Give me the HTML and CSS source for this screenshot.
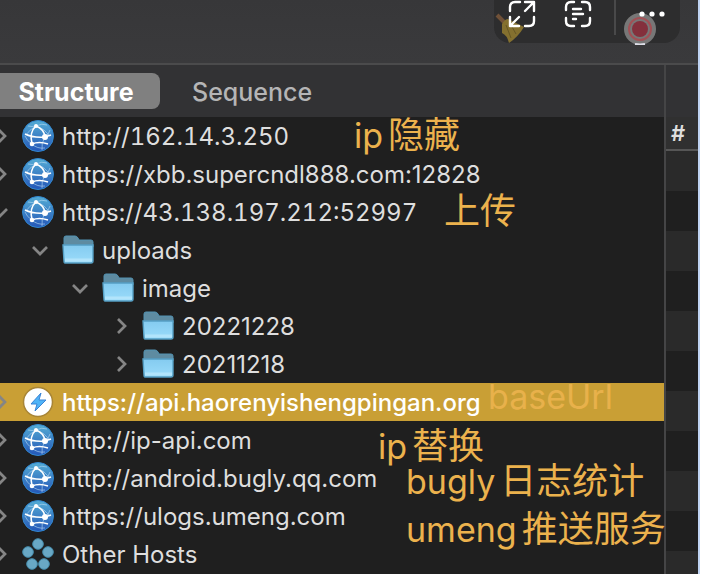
FILE: index.html
```html
<!DOCTYPE html>
<html lang="zh-CN">

<head>
    <meta charset="UTF-8">
    <meta name="viewport" content="width=device-width, initial-scale=1.0">
    <title>Structure</title>

    <link rel="stylesheet" href="styles.css">
</head>

<body>
    <!-- shared icons -->
    <svg class="symbols" aria-hidden="true">
        <linearGradient id="sky" x1="0" y1="0" x2="0" y2="1">
            <stop offset="0" stop-color="#55add4" />
            <stop offset="1" stop-color="#2456b8" />
        </linearGradient>
        <linearGradient id="paper" x1="0" y1="0" x2="0" y2="1">
            <stop offset="0" stop-color="#84cbf0" />
            <stop offset="1" stop-color="#9bdcfa" />
        </linearGradient>
        <symbol id="globe" viewBox="0 0 32 32">
            <circle cx="16" cy="16" r="15.5" fill="url(#sky)" stroke="#3187cf" />
            <g fill="none" stroke="#b9dcf5" stroke-width="1" opacity=".6">
                <path d="M6 6Q10 7 14 6Q20 3 25 5M4 15Q7 10 14 6Q22 8 28 16M28 10Q27 14 23 17Q19 23 20 30M10 24Q15 29 23 28M3 16Q5 21 10 24" />
            </g>
            <g fill="none" stroke="#fff" stroke-width="1.6">
                <path d="M14 6Q7 12 10 24M14 6Q22 9 23 17M3 14Q11 18 23 17L29 15M10 24Q17 21 26 24" />
            </g>
            <g fill="#fff">
                <circle cx="14" cy="6" r="2" />
                <circle cx="23" cy="17" r="3" />
                <circle cx="10" cy="24" r="2.3" />
            </g>
        </symbol>
        <symbol id="folder" viewBox="0 0 32 32">
            <path d="M2 13V4Q2 2 4 2H13Q15 2 16 4L17 6H29Q31 6 31 8V13Z" fill="#5e8ba1" stroke="#5293b3" />
            <path d="M1 11H31V27Q31 29 29 29H3Q2 29 2 27Z" fill="url(#paper)" stroke="#559fc4" stroke-width="1.4" />
            <path d="M3 26H30" stroke="#b2e4fb" stroke-width="3" />
        </symbol>
        <symbol id="bolt" viewBox="0 0 32 32">
            <circle cx="16" cy="16" r="14.5" fill="#fff" stroke="#a88536" stroke-width="1.5" />
            <path d="M19 7L9 18H15L13 25L24 14H17Z" fill="#50b4f7" stroke="#3a83d5" />
        </symbol>
        <symbol id="hosts" viewBox="0 0 32 32">
            <g fill="#69a8c5" stroke="#468eae">
                <circle cx="16" cy="6" r="5.3" />
                <circle cx="6" cy="14" r="5.3" />
                <circle cx="26" cy="14" r="5.3" />
                <circle cx="10" cy="26" r="5.3" />
                <circle cx="22" cy="26" r="5.3" />
            </g>
        </symbol>
        <symbol id="closed" viewBox="0 0 16 16">
            <path d="M6 1L13 8L6 15" fill="none" stroke="currentColor" stroke-width="2.7" />
        </symbol>
        <symbol id="open" viewBox="0 0 16 16">
            <path d="M1 5L8 12L15 5" fill="none" stroke="currentColor" stroke-width="2.7" />
        </symbol>
    </svg>

    <div class="window">
        <header class="titlebar">
            <div class="tools">
                <svg class="broom" viewBox="0 0 32 32" aria-hidden="true">
                    <path d="M3 3L11 11" stroke="#705138" stroke-width="4" />
                    <path d="M8 12Q11 7 14 7L30 15Q24 25 15 31Q13 23 8 21Z" fill="#84702f" />
                    <path d="M12 13L17 26M17 13L22 22" stroke="#665725" />
                </svg>
                <svg class="record" viewBox="0 0 32 32" aria-hidden="true">
                    <circle cx="16" cy="16" r="16" fill="#777" />
                    <circle cx="16" cy="16" r="11" fill="none" stroke="#a25055" stroke-width="2" />
                    <circle cx="16" cy="16" r="8" fill="#84303c" />
                    <path d="M11 31Q16 32 21 31" stroke="#dfdfe8" stroke-width="2" fill="none" />
                </svg>
                <button type="button" aria-label="Expand">
                    <svg viewBox="0 0 28 28">
                        <path d="M12 2H7Q2 2 2 7V11M2 17V26H11M17 26H21Q26 26 26 21V17M17 2H26V11M26 2L17 11M2 26L11 17" />
                    </svg>
                </button>
                <button type="button" aria-label="Scan text">
                    <svg viewBox="0 0 28 28">
                        <path d="M10 2H7Q2 2 2 7V10M18 2H21Q26 2 26 7V10M2 18V21Q2 26 7 26H10M18 26H21Q26 26 26 21V18M9 9H17M9 14H19M9 19H12" />
                    </svg>
                </button>
                <button type="button" class="more" aria-label="More">
                    <svg viewBox="0 0 28 28">
                        <circle cx="4" cy="14" r="2.6" />
                        <circle cx="14" cy="14" r="2.6" />
                        <circle cx="24" cy="14" r="2.6" />
                    </svg>
                </button>
            </div>
        </header>

        <main class="panes">
            <section class="navigator">
                <nav class="tabs">
                    <button type="button" class="tab active">Structure</button>
                    <button type="button" class="tab">Sequence</button>
                </nav>
                <ul class="tree">
                    <li class="row ip">
                        <button type="button" class="arrow" aria-label="Toggle"><svg><use href="#closed" /></svg></button>
                        <svg class="icon"><use href="#globe" /></svg>
                        <span>http://162.14.3.250</span>
                    </li>
                    <li class="row">
                        <button type="button" class="arrow" aria-label="Toggle"><svg><use href="#closed" /></svg></button>
                        <svg class="icon"><use href="#globe" /></svg>
                        <span>https://xbb.supercndl888.com:12828</span>
                    </li>
                    <li class="row ip">
                        <button type="button" class="arrow" aria-label="Toggle"><svg><use href="#open" /></svg></button>
                        <svg class="icon"><use href="#globe" /></svg>
                        <span>https://43.138.197.212:52997</span>
                    </li>
                    <li class="row level-1">
                        <button type="button" class="arrow" aria-label="Toggle"><svg><use href="#open" /></svg></button>
                        <svg class="icon"><use href="#folder" /></svg>
                        <span>uploads</span>
                    </li>
                    <li class="row level-2">
                        <button type="button" class="arrow" aria-label="Toggle"><svg><use href="#open" /></svg></button>
                        <svg class="icon"><use href="#folder" /></svg>
                        <span>image</span>
                    </li>
                    <li class="row level-3">
                        <button type="button" class="arrow" aria-label="Toggle"><svg><use href="#closed" /></svg></button>
                        <svg class="icon"><use href="#folder" /></svg>
                        <span>20221228</span>
                    </li>
                    <li class="row level-3">
                        <button type="button" class="arrow" aria-label="Toggle"><svg><use href="#closed" /></svg></button>
                        <svg class="icon"><use href="#folder" /></svg>
                        <span>20211218</span>
                    </li>
                    <li class="row selected">
                        <button type="button" class="arrow" aria-label="Toggle"><svg><use href="#closed" /></svg></button>
                        <svg class="icon"><use href="#bolt" /></svg>
                        <span>https://api.haorenyishengpingan.org</span>
                    </li>
                    <li class="row">
                        <button type="button" class="arrow" aria-label="Toggle"><svg><use href="#closed" /></svg></button>
                        <svg class="icon"><use href="#globe" /></svg>
                        <span>http://ip-api.com</span>
                    </li>
                    <li class="row">
                        <button type="button" class="arrow" aria-label="Toggle"><svg><use href="#closed" /></svg></button>
                        <svg class="icon"><use href="#globe" /></svg>
                        <span>http://android.bugly.qq.com</span>
                    </li>
                    <li class="row">
                        <button type="button" class="arrow" aria-label="Toggle"><svg><use href="#closed" /></svg></button>
                        <svg class="icon"><use href="#globe" /></svg>
                        <span>https://ulogs.umeng.com</span>
                    </li>
                    <li class="row">
                        <button type="button" class="arrow" aria-label="Toggle"><svg><use href="#closed" /></svg></button>
                        <svg class="icon"><use href="#hosts" /></svg>
                        <span>Other Hosts</span>
                    </li>
                </ul>
            </section>
            <section class="contents">
                <div class="column-head">#</div>
                <div class="stripes"></div>
            </section>
        </main>
    </div>

    <!-- notes over the tree -->
    <div class="note note-hidden">ip<span>隐藏</span></div>
    <div class="note note-upload"><span>上传</span></div>
    <div class="note note-base">baseUrl</div>
    <div class="note note-replace">ip<span>替换</span></div>
    <div class="note note-bugly">bugly<span>日志统计</span></div>
    <div class="note note-umeng">umeng<span>推送服务</span></div>
</body>

</html>
```
FILE: styles.css
```css
* {
    margin: 0;
    padding: 0;
    box-sizing: border-box;
}
body {
    position: relative;
    height: 100vh;
    overflow: hidden;
    background: #fff;
    font-family: Inter, "Noto Sans CJK SC", sans-serif;
    font-size: 24px;
    color: #dedede;
}
button {
    border: none;
    background: none;
    font: inherit;
    color: inherit;
}
svg {
    display: block;
}
.symbols {
    position: absolute;
    width: 0;
    height: 0;
}
.window {
    display: flex;
    flex-direction: column;
    height: 100%;
    margin-right: 6px;
    border-right: 2px solid #bfd3f2;
    background: #1f1f1f;
}

/* title bar */
.titlebar {
    position: relative;
    flex: none;
    height: 65px;
    background: linear-gradient(#373739, #3a3a3c);
    border-bottom: 2px solid #4b4b4c;
}
.tools {
    position: absolute;
    top: 0;
    right: 18px;
    display: flex;
    gap: 28px;
    width: 186px;
    height: 43px;
    padding-left: 14px;
    border-radius: 0 0 16px 16px;
    background: #2d2d2e;
}
.tools button {
    position: relative;
    width: 28px;
    height: 28px;
}
.tools button svg {
    width: 28px;
    height: 28px;
    fill: none;
    stroke: #fff;
    stroke-width: 2.4;
    stroke-linecap: round;
    stroke-linejoin: round;
}
.tools .more {
    display: flex;
    align-items: flex-start;
    width: 52px;
    height: 35px;
    margin-left: -6px;
    padding-left: 22px;
    border-left: 2px solid #49494a;
}
.tools .more svg {
    flex: none;
    fill: #fff;
    stroke: none;
}
.broom {
    position: absolute;
    top: 12px;
    left: 0;
    width: 32px;
    height: 32px;
}
.record {
    position: absolute;
    top: 13px;
    right: 24px;
    width: 32px;
    height: 32px;
}

/* panes */
.panes {
    display: flex;
    flex: 1;
    min-height: 0;
}
.navigator {
    flex: 1;
    min-width: 0;
}
.tabs {
    display: flex;
    gap: 14px;
    height: 52px;
    padding-top: 8px;
    background: #323234;
}
.tab {
    height: 36px;
    padding: 1px 18px 0;
    font-size: 25px;
    font-weight: 500;
    color: #b5b5b6;
}
.tab.active {
    width: 160px;
    padding-right: 26px;
    border-radius: 0 8px 8px 0;
    background: #808080;
    font-weight: 700;
    color: #fff;
}
.tree {
    list-style: none;
}
.row {
    display: flex;
    align-items: center;
    height: 38px;
    white-space: nowrap;
}
.ip {
    font-variant-numeric: tabular-nums;
}
.arrow {
    flex: none;
    width: 16px;
    height: 16px;
    margin-left: -8px;
    margin-right: 14px;
    color: #858585;
}
.arrow svg {
    width: 16px;
    height: 16px;
}
.icon {
    flex: none;
    width: 32px;
    height: 32px;
    margin-right: 8px;
}
.level-1 {
    padding-left: 40px;
}
.level-2 {
    padding-left: 80px;
}
.level-3 {
    padding-left: 120px;
}
.selected {
    background: #c99f35;
    color: #fff;
    font-weight: 500;
}

.contents {
    display: flex;
    flex-direction: column;
    flex: none;
    width: 34px;
    padding-top: 52px;
    border-left: 2px solid #454546;
    background: #323234;
}
.column-head {
    height: 34px;
    padding-left: 5px;
    border-bottom: 2px solid #565656;
    background: #303030;
    font-size: 22px;
    font-weight: 600;
    line-height: 32px;
}
.stripes {
    flex: 1;
    background: repeating-linear-gradient(#2a2a2a 0 40px, #1f1f1f 40px 80px);
}

/* notes */
.note {
    position: absolute;
    font-size: 34px;
    line-height: 40px;
    white-space: nowrap;
    color: #ecb24d;
}
.note span {
    margin-left: 5px;
    font-size: 36px;
}
.note-hidden {
    top: 115px;
    left: 354px;
}
.note-upload {
    top: 191px;
    left: 439px;
}
.note-base {
    top: 377px;
    left: 488px;
    color: #e8b14b;
}
.note-replace {
    top: 426px;
    left: 378px;
}
.note-bugly {
    top: 461px;
    left: 406px;
}
.note-umeng {
    top: 509px;
    left: 406px;
}
```
